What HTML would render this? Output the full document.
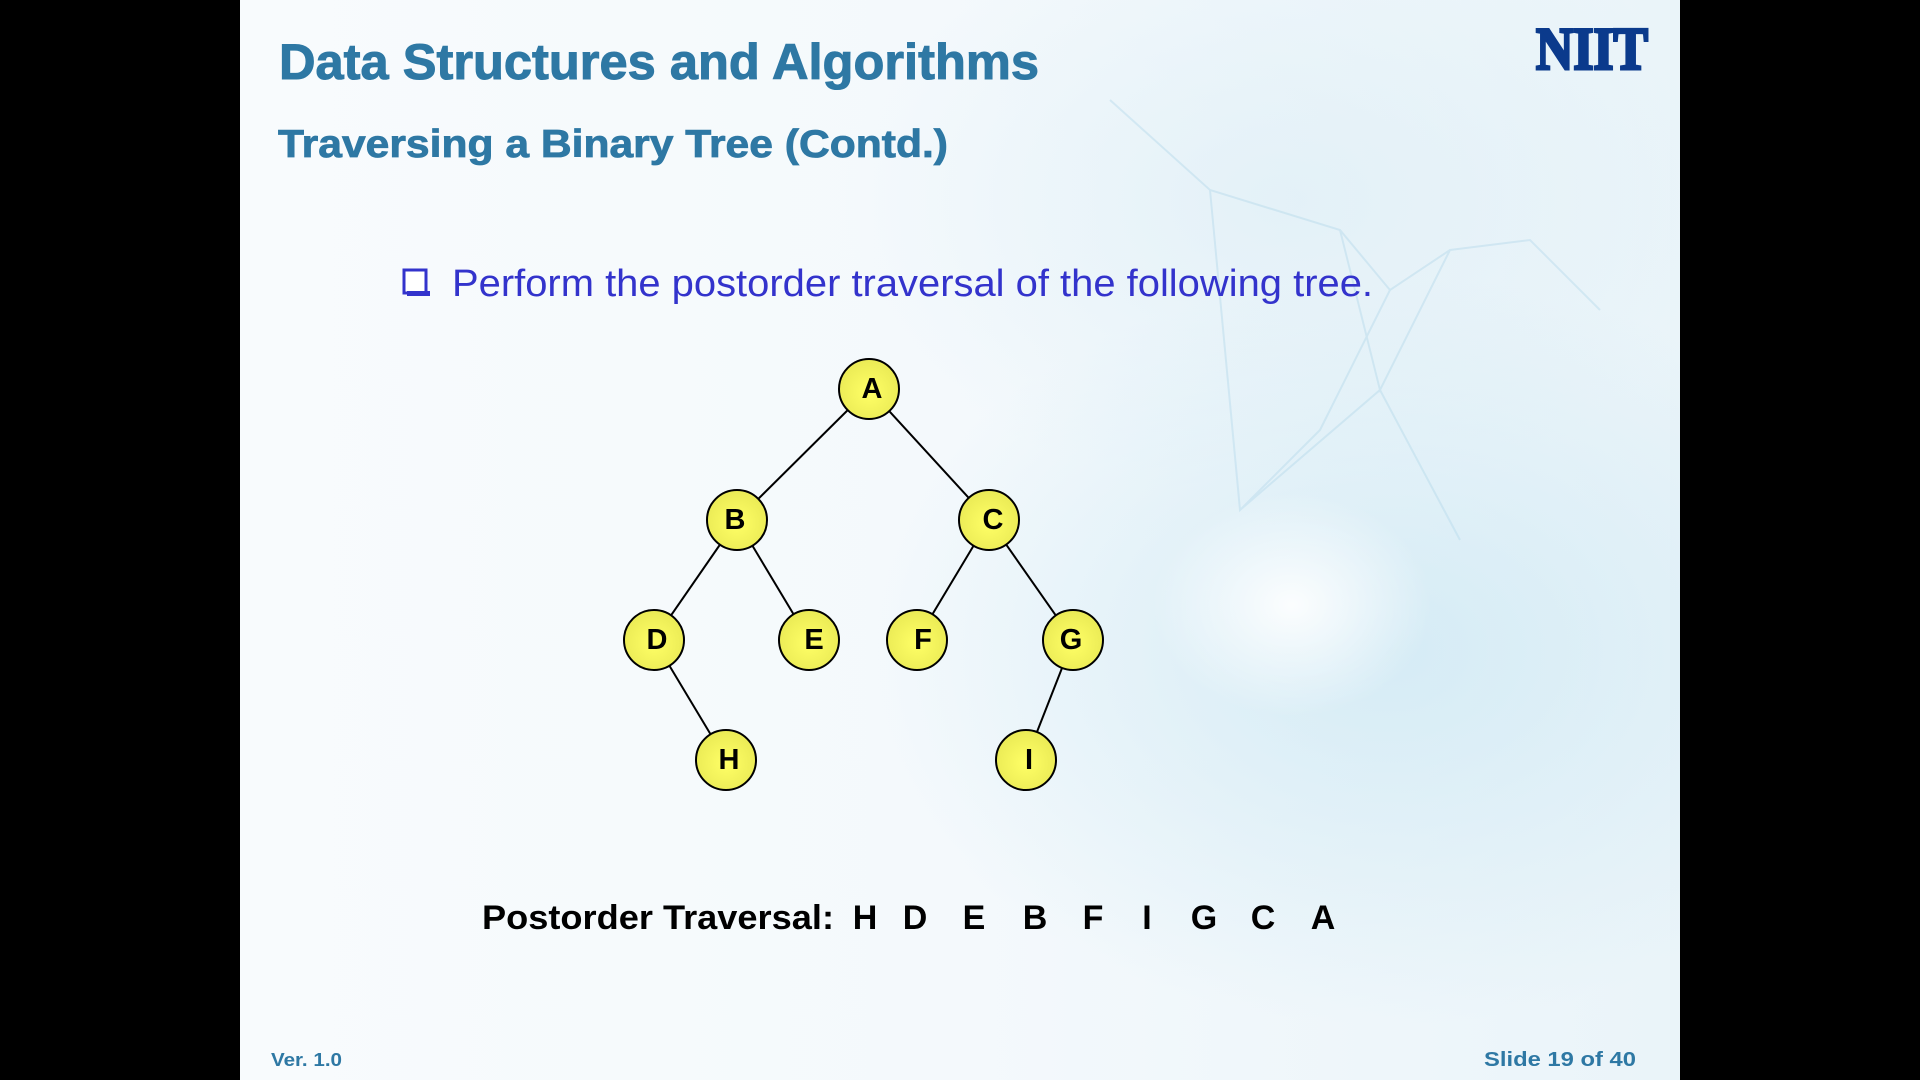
<!DOCTYPE html>
<html><head><meta charset="utf-8"><style>
html,body{margin:0;padding:0;background:#000;width:1920px;height:1080px;overflow:hidden}
#s{position:absolute;left:240px;top:0;width:1440px;height:1080px;
background:
radial-gradient(ellipse 200px 160px at 1052px 605px, rgba(255,255,255,0.9), rgba(255,255,255,0) 70%),
radial-gradient(ellipse 700px 500px at 1150px 650px, rgba(200,230,243,0.65), rgba(220,238,247,0) 75%),
radial-gradient(ellipse 600px 400px at 1050px 200px, rgba(215,235,245,0.5), rgba(230,242,249,0) 75%),
linear-gradient(90deg,#f8fbfd 0%,#f4f9fc 50%,#eaf4f9 100%);}
svg{position:absolute;left:0;top:0}
</style></head><body>
<div id="s"></div>
<svg width="1920" height="1080" viewBox="0 0 1920 1080">
<g stroke="#b5d9ea" stroke-width="2" opacity="0.45" fill="none">
<path d="M1110 100 L1210 190 L1340 230 L1390 290 L1450 250 L1530 240 L1600 310"/>
<path d="M1210 190 L1240 510 L1320 430 L1390 290 M1240 510 L1380 390 L1460 540"/>
<path d="M1340 230 L1380 390 L1450 250"/>
</g>
<g font-family="Liberation Sans, sans-serif" font-weight="bold" fill="#2e78a4">
<text x="279" y="79" font-size="50" textLength="760" lengthAdjust="spacingAndGlyphs" stroke="#2e78a4" stroke-width="1">Data Structures and Algorithms</text>
<text x="278" y="157" font-size="39" textLength="670" lengthAdjust="spacingAndGlyphs" stroke="#2e78a4" stroke-width="0.8">Traversing a Binary Tree (Contd.)</text>
<text x="271" y="1066" font-size="18" textLength="71" lengthAdjust="spacingAndGlyphs">Ver. 1.0</text>
<text x="1636" y="1066" font-size="20" text-anchor="end" textLength="152" lengthAdjust="spacingAndGlyphs">Slide 19 of 40</text>
</g>
<text x="1536" y="69" font-family="Liberation Serif, serif" font-weight="bold" font-size="60" fill="#0b3a8c" stroke="#0b3a8c" stroke-width="3" textLength="112" lengthAdjust="spacingAndGlyphs">NIIT</text>
<rect x="404" y="270" width="22" height="23" fill="#fff" stroke="#3333cc" stroke-width="3"/>
<rect x="407" y="291" width="23" height="5" fill="#3333cc"/>
<text x="452" y="296" font-family="Liberation Sans, sans-serif" font-size="38" fill="#3333cc" textLength="921" lengthAdjust="spacingAndGlyphs">Perform the postorder traversal of the following tree.</text>
<g stroke="#000" stroke-width="2">
<line x1="869" y1="389" x2="737" y2="520"/><line x1="869" y1="389" x2="989" y2="520"/>
<line x1="737" y1="520" x2="654" y2="640"/><line x1="737" y1="520" x2="809" y2="640"/>
<line x1="989" y1="520" x2="917" y2="640"/><line x1="989" y1="520" x2="1073" y2="640"/>
<line x1="654" y1="640" x2="726" y2="760"/><line x1="1073" y1="640" x2="1026" y2="760"/>
</g>
<defs><radialGradient id="y" cx="0.5" cy="0.55" r="0.55"><stop offset="0" stop-color="#ffff66"/><stop offset="1" stop-color="#eaea55"/></radialGradient></defs>
<g fill="url(#y)" stroke="#000" stroke-width="2">
<circle cx="869" cy="389" r="30"/><circle cx="737" cy="520" r="30"/><circle cx="989" cy="520" r="30"/>
<circle cx="654" cy="640" r="30"/><circle cx="809" cy="640" r="30"/><circle cx="917" cy="640" r="30"/><circle cx="1073" cy="640" r="30"/>
<circle cx="726" cy="760" r="30"/><circle cx="1026" cy="760" r="30"/>
</g>
<g font-family="Liberation Sans, sans-serif" font-weight="bold" font-size="29" text-anchor="middle">
<text x="872" y="398">A</text><text x="735" y="529">B</text><text x="993" y="529">C</text>
<text x="657" y="649">D</text><text x="814" y="649">E</text><text x="923" y="649">F</text><text x="1071" y="649">G</text>
<text x="729" y="769">H</text><text x="1029" y="769">I</text>
</g>
<text x="482" y="929" font-family="Liberation Sans, sans-serif" font-weight="bold" font-size="34" textLength="352" lengthAdjust="spacingAndGlyphs">Postorder Traversal:</text>
<g font-family="Liberation Sans, sans-serif" font-weight="bold" font-size="34" text-anchor="middle">
<text x="865" y="929">H</text><text x="915" y="929">D</text><text x="974" y="929">E</text><text x="1035" y="929">B</text><text x="1093" y="929">F</text><text x="1147" y="929">I</text><text x="1204" y="929">G</text><text x="1263" y="929">C</text><text x="1323" y="929">A</text>
</g>
</svg>
</body></html>
